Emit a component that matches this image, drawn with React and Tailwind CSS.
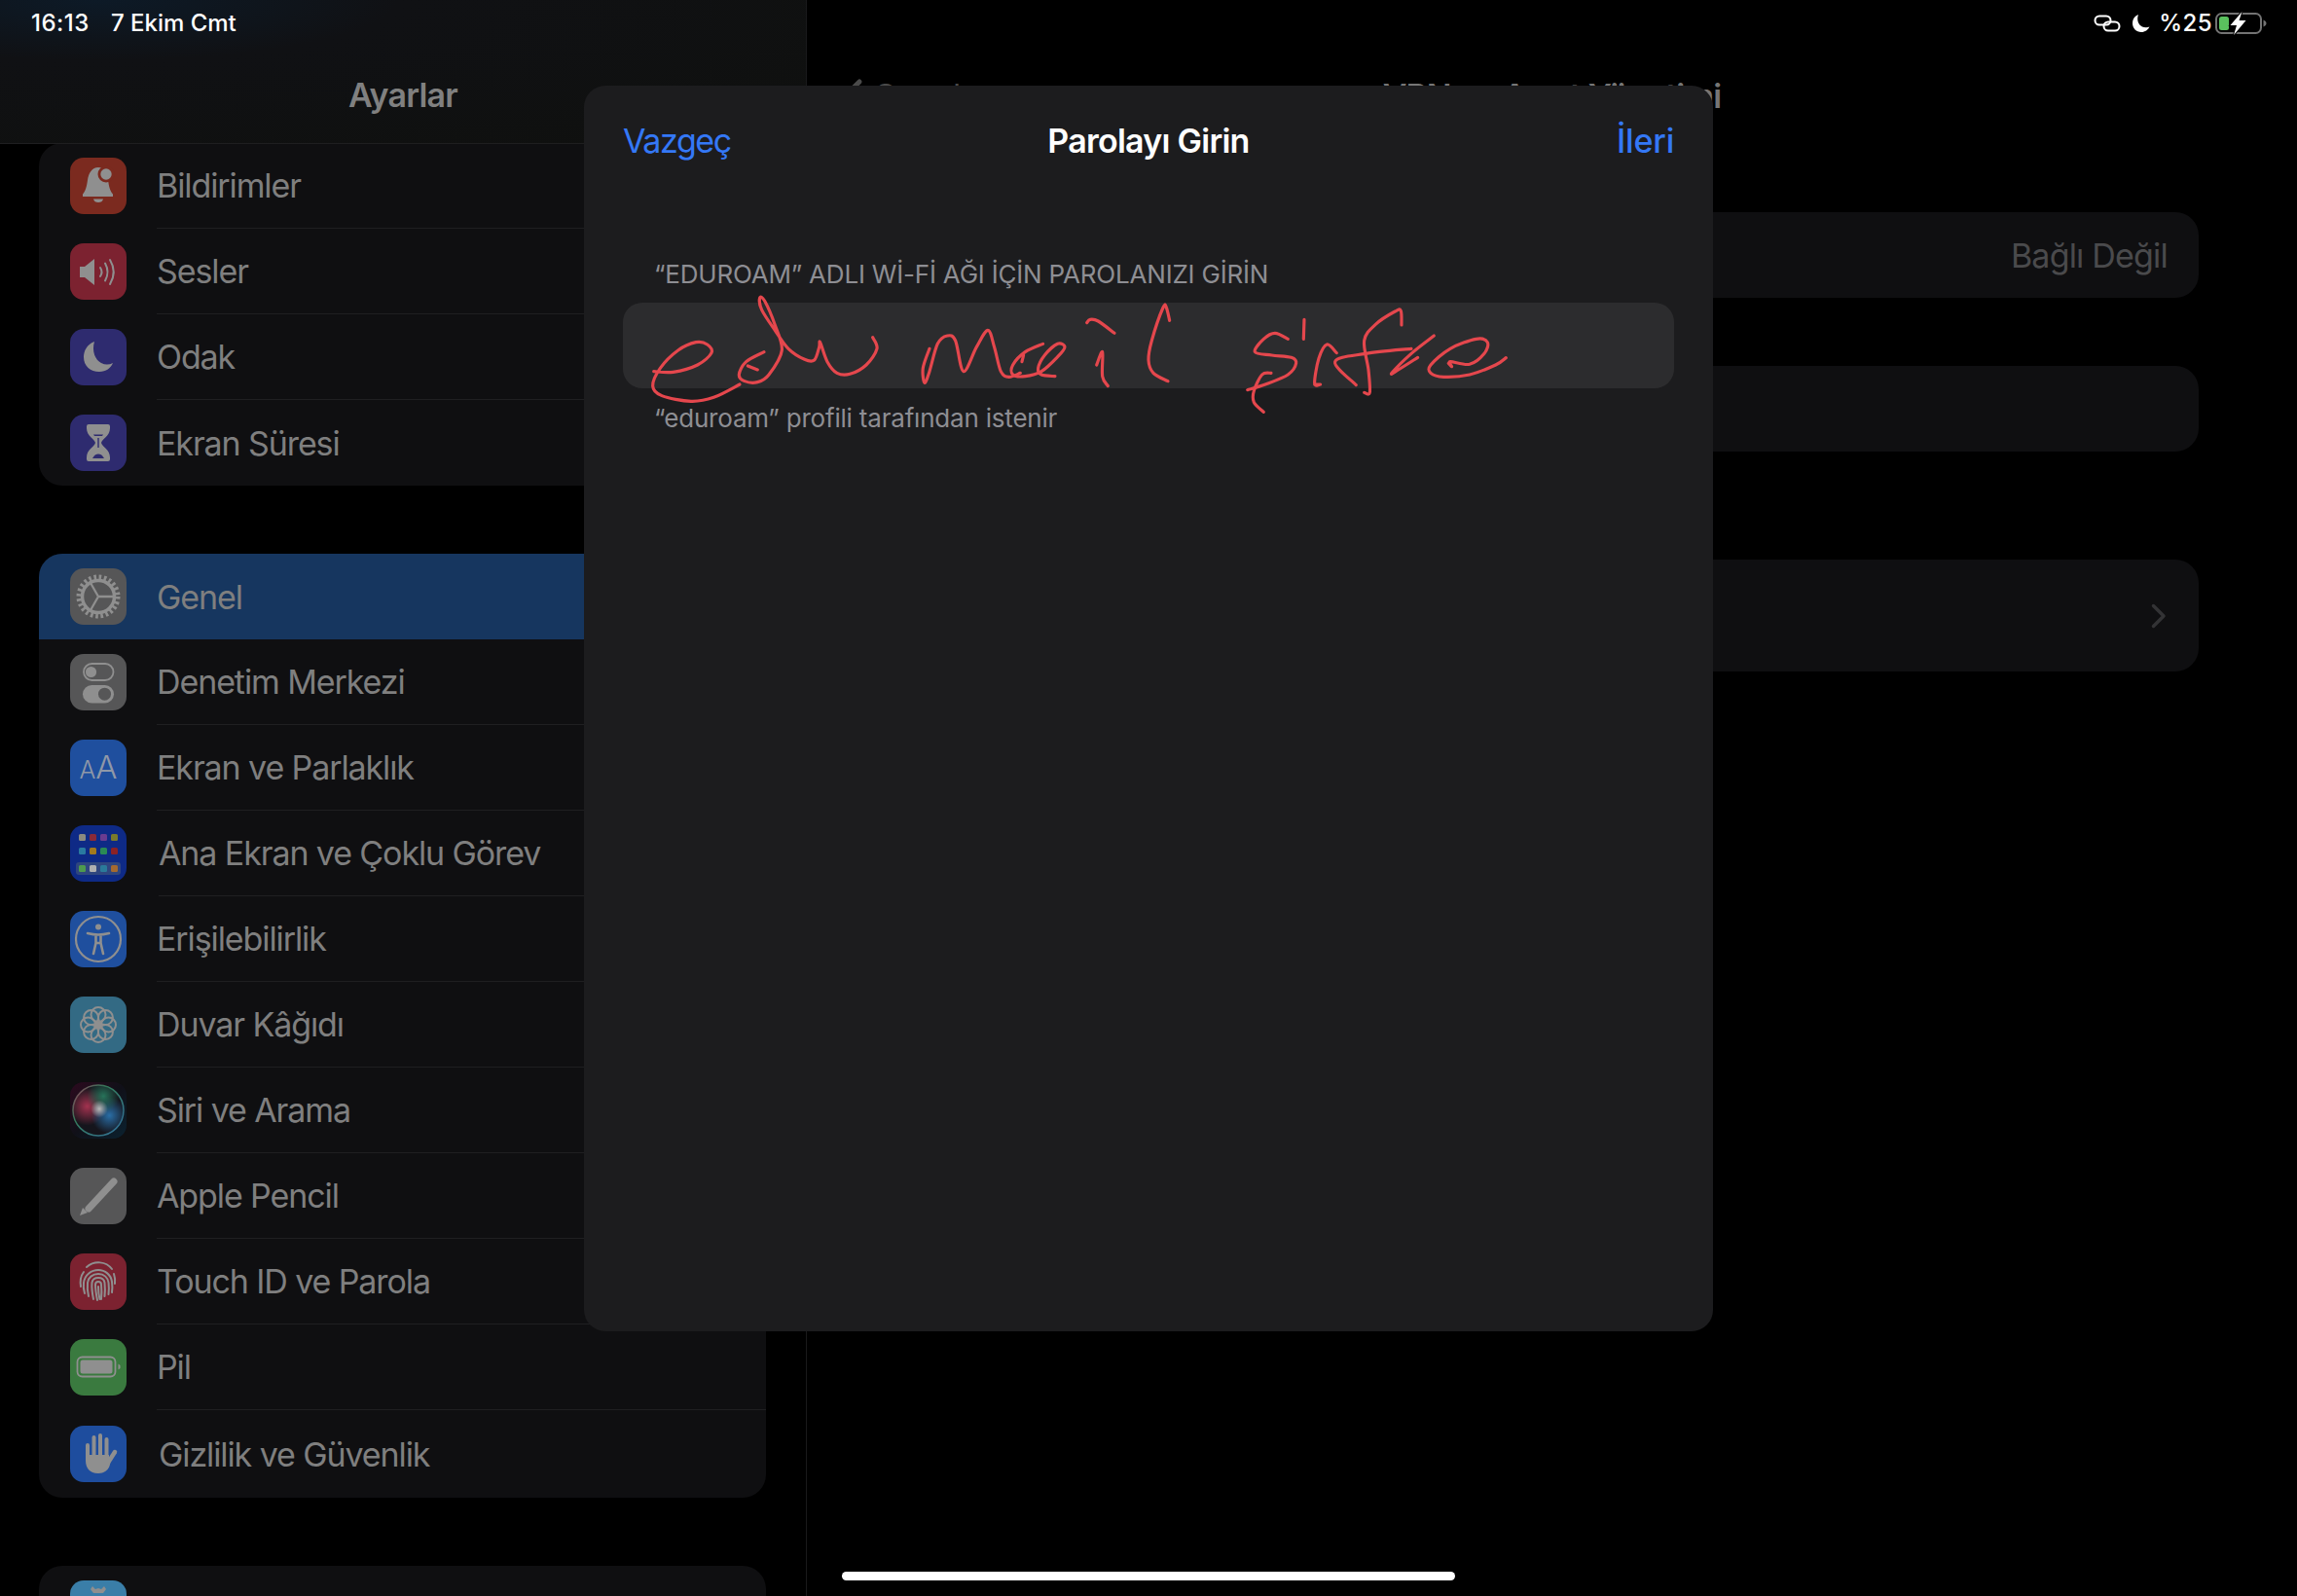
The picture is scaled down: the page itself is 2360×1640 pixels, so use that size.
const GRAY = "#8f8f8f";

// coordinates of the pen strokes are in px relative to the two crop origins
const strokesA = [
  [[155,395],[215,397],[290,375],[333,338],[320,312],[285,305],[230,330],[175,385],[152,440],[180,470],[270,487],[340,475],[420,435]],
  [[445,378],[475,390]],
  [[495,335],[440,365],[418,405],[435,425],[475,428],[510,405],[550,330],[528,250],[497,178],[482,168],[488,205],[530,270],[570,325],[620,358],[650,360],[665,320],[668,305],[690,365],[720,400],[760,403],[810,375],[843,325],[830,290]],
  [[1005,325],[985,385],[990,430],[1005,395],[1030,310],[1060,285],[1085,300],[1110,395],[1150,320],[1185,268],[1205,320],[1225,395],[1250,412],[1285,400]],
  [[1355,310],[1300,335],[1262,375],[1262,405],[1300,410],[1350,395],[1400,350],[1422,320],[1400,310],[1360,345],[1340,385],[1350,405],[1392,410]],
  [[1295,345],[1290,365]],
];
const strokesB = [
  [[-10,155],[0,145],[25,150],[75,187]],
  [[20,285],[38,245],[38,320],[55,350]],
  [[245,148],[235,108],[225,108],[190,210],[180,270],[195,310],[240,335]],
  [[610,205],[570,187],[535,205],[508,245],[560,255],[620,262],[635,280],[610,315],[540,345],[485,362]],
  [[558,310],[530,315],[505,365],[505,400],[535,430]],
  [[660,145],[658,205]],
  [[692,345],[710,345],[692,342],[705,265],[730,222],[760,248]],
  [[820,347],[755,275],[850,250],[990,235]],
  [[960,162],[958,118],[940,120],[880,160],[845,210],[858,300],[862,370],[845,370]],
  [[1060,195],[990,250],[930,310],[950,300],[1010,262]],
  [[1105,280],[1115,290],[1110,275],[1170,283],[1215,250],[1225,215],[1190,205],[1110,235],[1050,285],[1050,310],[1090,322],[1170,315],[1250,285],[1282,263]],
];

function smooth(pts) {
  let d = `M${pts[0][0]} ${pts[0][1]}`;
  for (let i = 0; i < pts.length - 1; i++) {
    const p0 = pts[i - 1] || pts[i];
    const p1 = pts[i];
    const p2 = pts[i + 1];
    const p3 = pts[i + 2] || p2;
    const c1x = p1[0] + (p2[0] - p0[0]) / 6;
    const c1y = p1[1] + (p2[1] - p0[1]) / 6;
    const c2x = p2[0] - (p3[0] - p1[0]) / 6;
    const c2y = p2[1] - (p3[1] - p1[1]) / 6;
    d += ` C${c1x} ${c1y} ${c2x} ${c2y} ${p2[0]} ${p2[1]}`;
  }
  return d;
}

function Scribble() {
  return (
    <svg className="pointer-events-none absolute left-0 top-0 z-40 h-[1640px] w-[2360px]" viewBox="0 0 2360 1640" fill="none" stroke="#e5474d" strokeWidth="9.500" strokeLinecap="round" strokeLinejoin="round">
      <g transform="translate(620 250) scale(0.3333)">
        {strokesA.map((s, i) => <path key={i} d={smooth(s)} />)}
      </g>
      <g transform="translate(1120 280) scale(0.3333)">
        {strokesB.map((s, i) => <path key={i} d={smooth(s)} />)}
      </g>
    </svg>
  );
}

function Glyph({ children }) {
  return <svg viewBox="0 0 58 58" className="h-[58px] w-[58px]">{children}</svg>;
}

const BellIcon = (
  <Glyph>
    <path fill={GRAY} d="M29 10c-6.500 0-10 6-11 13-1 7-2 11-5 14.500V40h31v-2.500c-3-3.500-4-7.500-5-14.500-1-7-3.500-13-10-13z" />
    <circle cx="37" cy="17" r="8.500" fill="#7b2a1f" />
    <circle cx="37" cy="17" r="5.700" fill={GRAY} />
    <path fill={GRAY} d="M24 42.500h10c-.5 2.500-2.500 3.500-5 3.500s-4.500-1-5-3.500z" />
  </Glyph>
);

const SoundIcon = (
  <Glyph>
    <path fill={GRAY} d="M10 24h5l10-8v27l-10-8h-5z" />
    <g fill="none" stroke={GRAY} strokeWidth="2" strokeLinecap="round">
      <path d="M31 25q3 4.500 0 9" />
      <path d="M36 20.500q5 9 0 18" />
      <path d="M41 17q7.500 12.500 0 25" />
    </g>
  </Glyph>
);

const MoonIcon = (
  <Glyph>
    <path fill={GRAY} d="M25 13C17 16 14 23 14 29c0 9 7 15 16 15 7 0 12-4 14-9-4 2-8 2-12 0-6-3-10-12-7-22z" />
  </Glyph>
);

const HourglassIcon = (
  <Glyph>
    <path fill={GRAY} d="M19 10h20a2 2 0 0 1 2 2v2c0 8-8 11-9 15 1 4 9 7 9 15v2a2 2 0 0 1-2 2H19a2 2 0 0 1-2-2v-2c0-8 8-11 9-15-1-4-9-7-9-15v-2a2 2 0 0 1 2-2z" />
    <path fill="#2e2b6f" d="M24 20.500h10l-1 1.500h-8zM28.300 24h1.400v10h-1.400zM24 43.500c1-2 3-3 5-3s4 1 5 3l1 1.500H23z" />
  </Glyph>
);

const GearIcon = (
  <Glyph>
    <g fill="none" stroke={GRAY}>
      <circle cx="29" cy="29" r="20" strokeWidth="5" strokeDasharray="2.618 2.618" />
      <circle cx="29" cy="29" r="16.500" strokeWidth="3.500" />
      <path strokeWidth="2.300" d="M29 29h16M29 29l-8-14M29 29l-8 14" />
    </g>
  </Glyph>
);

const ToggleIcon = (
  <Glyph>
    <rect x="14" y="10" width="30.500" height="17" rx="8.500" fill="none" stroke={GRAY} strokeWidth="1.800" />
    <circle cx="21.500" cy="18.500" r="5.600" fill={GRAY} />
    <rect x="13" y="32" width="32" height="18.500" rx="9.250" fill={GRAY} />
    <circle cx="35.500" cy="41.200" r="6.500" fill="#565657" />
  </Glyph>
);

const TextIcon = (
  <div className="flex h-[58px] w-[58px] items-baseline justify-center pt-[12px] leading-none text-[#8f98a8]">
    <span className="text-[25px] font-light">A</span>
    <span className="text-[33px] font-light">A</span>
  </div>
);

const homeDots = [
  [9, 9, "#8b8a80"], [20, 9, "#8a2a38"], [31, 9, "#6a3c90"], [42, 9, "#7a7a2a"],
  [9, 23, "#2a7aa0"], [20, 23, "#a27a1e"], [31, 23, "#2a8a55"], [42, 23, "#8a2226"],
  [9, 41, "#4e9a4e"], [20, 41, "#b0b0b0"], [31, 41, "#2a7a9a"], [42, 41, "#a46a30"],
];

const HomeIcon = (
  <Glyph>
    <rect x="6" y="38" width="46" height="13" rx="3" fill="#2f467f" />
    {homeDots.map(([x, y, c]) => <rect key={`${x}-${y}`} x={x} y={y} width="7" height="7" rx="1.500" fill={c} />)}
  </Glyph>
);

const AccessIcon = (
  <Glyph>
    <circle cx="29" cy="29" r="23" fill="none" stroke={GRAY} strokeWidth="2.200" />
    <circle cx="29" cy="16.500" r="3" fill={GRAY} />
    <path fill="none" stroke={GRAY} strokeWidth="2.600" strokeLinecap="round" strokeLinejoin="round" d="M18 23c4 1 7 1.500 11 1.500S36 24 40 23M26.500 25v8l-2.500 11M31.500 25v8l2.500 11M26.500 33h5" />
  </Glyph>
);

const FlowerIcon = (
  <Glyph>
    <g fill="none" stroke={GRAY} strokeWidth="2">
      {[0, 45, 90, 135, 180, 225, 270, 315].map((a) => (
        <circle key={a} cx="29" cy="18.500" r="7.500" transform={`rotate(${a} 29 29)`} />
      ))}
    </g>
    <circle cx="29" cy="29" r="3.500" fill={GRAY} />
  </Glyph>
);

const SiriIcon = (
  <svg viewBox="0 0 58 58" className="h-[58px] w-[58px]">
    <defs>
      <radialGradient id="siriRed" cx="0.28" cy="0.42" r="0.38">
        <stop offset="0" stopColor="#a3324f" />
        <stop offset="1" stopColor="#a3324f" stopOpacity="0" />
      </radialGradient>
      <radialGradient id="siriBlue" cx="0.72" cy="0.6" r="0.36">
        <stop offset="0" stopColor="#2a6ea6" />
        <stop offset="1" stopColor="#2a6ea6" stopOpacity="0" />
      </radialGradient>
      <radialGradient id="siriGreen" cx="0.6" cy="0.22" r="0.32">
        <stop offset="0" stopColor="#27735a" />
        <stop offset="1" stopColor="#27735a" stopOpacity="0" />
      </radialGradient>
      <radialGradient id="siriCore" cx="0.52" cy="0.47" r="0.17">
        <stop offset="0" stopColor="#b8b8b8" />
        <stop offset="1" stopColor="#b8b8b8" stopOpacity="0" />
      </radialGradient>
      <linearGradient id="siriBg" x1="0" y1="0" x2="1" y2="1">
        <stop offset="0" stopColor="#2c0a1e" />
        <stop offset="0.5" stopColor="#101018" />
        <stop offset="1" stopColor="#0b2230" />
      </linearGradient>
      <linearGradient id="siriRing" x1="0" y1="0" x2="1" y2="1">
        <stop offset="0" stopColor="#8a4058" />
        <stop offset="0.35" stopColor="#357a5a" />
        <stop offset="1" stopColor="#33709b" />
      </linearGradient>
    </defs>
    <rect width="58" height="58" fill="url(#siriBg)" />
    <circle cx="29" cy="29" r="26" fill="#15151c" stroke="url(#siriRing)" strokeWidth="1.500" />
    <circle cx="29" cy="29" r="26" fill="url(#siriRed)" />
    <circle cx="29" cy="29" r="26" fill="url(#siriBlue)" />
    <circle cx="29" cy="29" r="26" fill="url(#siriGreen)" />
    <circle cx="29" cy="29" r="26" fill="url(#siriCore)" />
  </svg>
);

const PencilIcon = (
  <Glyph>
    <path fill="none" stroke={GRAY} strokeWidth="7" strokeLinecap="round" d="M45 14 19 42" />
    <path fill={GRAY} d="M10 49l3-8 5 5z" />
  </Glyph>
);

const FingerprintIcon = (
  <Glyph>
    <g fill="none" stroke={GRAY} strokeWidth="2" strokeLinecap="round">
      <path d="M17 14C25 7 37 8 43 16" />
      <path d="M11 34c-1-6 0-11 3-15M46 31c.5-4 0-7-1-10" />
      <path d="M15 41c-1-3-1.500-7-1-11 1-8 8-13 15-13s13 5 14 12c.5 4 .5 8 0 11" />
      <path d="M19 44c-1-4-1.500-9-1-14 .5-5 5-9 11-9s10 4 10.500 9c.5 4 .5 8 0 12" />
      <path d="M24 47c-1-5-2-11-1.500-17 .5-3 3-5 6.500-5s6 2 6.500 5c.5 5 .5 10 0 14" />
      <path d="M29 29c-2 0-3 1-3 3 0 5 1 11 2 16M29 29c2 0 3 1 3 3 .5 5 .5 10 0 15" />
      <path d="M29 34c0 5 .5 9 1.500 13" />
    </g>
  </Glyph>
);

const BatteryIcon = (
  <Glyph>
    <rect x="7.500" y="18.500" width="39" height="20" rx="5" fill="none" stroke={GRAY} strokeWidth="1.800" />
    <rect x="10.500" y="21.500" width="33" height="14" rx="2.500" fill={GRAY} />
    <path fill={GRAY} d="M49.500 25.500l2 1.500v3l-2 1.500z" />
  </Glyph>
);

const HandIcon = (
  <Glyph>
    <g stroke={GRAY} strokeLinecap="round" fill="none">
      <path strokeWidth="4" d="M18 20v14M24.500 12v20M31 10v20M37.500 14v20" />
      <path strokeWidth="4.500" d="M39 38l7-11" />
    </g>
    <path fill={GRAY} d="M16 30h24v6c3 0 1 13-11 13-9 0-13-6-13-13z" />
  </Glyph>
);

const PeekIcon = (
  <Glyph>
    <path fill={GRAY} d="M23 6l3 3 3-1 3 1 3-3 2 3-3 4h-10l-3-4z" />
  </Glyph>
);

const firstGroup = [
  { label: "Bildirimler", bg: "bg-[#7b2a1f]", icon: BellIcon },
  { label: "Sesler", bg: "bg-[#7c2230]", icon: SoundIcon },
  { label: "Odak", bg: "bg-[#2e2b6f]", icon: MoonIcon },
  { label: "Ekran Süresi", bg: "bg-[#2e2b6f]", icon: HourglassIcon },
];

const secondGroup = [
  { label: "Genel", bg: "bg-[#565657]", icon: GearIcon, active: true },
  { label: "Denetim Merkezi", bg: "bg-[#565657]", icon: ToggleIcon },
  { label: "Ekran ve Parlaklık", bg: "bg-[#1f4f9e]", icon: TextIcon },
  { label: "Ana Ekran ve Çoklu Görev", bg: "bg-[#0e2a86]", icon: HomeIcon, nudge: true },
  { label: "Erişilebilirlik", bg: "bg-[#1f4f9e]", icon: AccessIcon },
  { label: "Duvar Kâğıdı", bg: "bg-[#336a84]", icon: FlowerIcon },
  { label: "Siri ve Arama", bg: "bg-[#101018]", icon: SiriIcon },
  { label: "Apple Pencil", bg: "bg-[#565657]", icon: PencilIcon },
  { label: "Touch ID ve Parola", bg: "bg-[#7c2230]", icon: FingerprintIcon },
  { label: "Pil", bg: "bg-[#3a7a3f]", icon: BatteryIcon },
  { label: "Gizlilik ve Güvenlik", bg: "bg-[#1e4d9e]", icon: HandIcon, nudge: true, tall: true },
];

function Row({ item, last }) {
  return (
    <div className={`flex items-center pl-[32px] ${item.tall ? "h-[90px]" : "h-[88px]"} ${item.active ? "bg-[#16365f]" : ""}`}>
      <div className={`h-[58px] w-[58px] shrink-0 overflow-hidden rounded-[14px] ${item.bg}`}>{item.icon}</div>
      <div className={`flex h-full flex-1 items-center ${item.nudge ? "ml-[33px]" : "ml-[31px]"} ${last || item.active ? "" : "border-b border-[#1f1f21]"}`}>
        <span className="text-[34px] tracking-[-1.1px] text-[#7f7f7f]">{item.label}</span>
      </div>
    </div>
  );
}

function Group({ items }) {
  return (
    <div className="overflow-hidden rounded-[24px] bg-[#0f0f11]">
      {items.map((item, i) => <Row key={item.label} item={item} last={i === items.length - 1} />)}
    </div>
  );
}

function Sidebar() {
  return (
    <div className="flex h-full w-[829px] shrink-0 flex-col overflow-hidden border-r border-[#19191b]">
      <div className="relative z-10 -mb-[1px] h-[148px] shrink-0 border-b border-[#1e1e20] bg-[radial-gradient(ellipse_at_12%_0%,#0d1a27_0%,#101114_30%,#0f100e_100%)] pt-[72px] text-center text-[34px] font-semibold leading-[52px] tracking-[-0.8px] text-[#808080]">
        Ayarlar
      </div>
      <div className="flex flex-col gap-[70px] pl-[40px] pr-[41px]">
        <Group items={firstGroup} />
        <Group items={secondGroup} />
        <div className="h-[100px] shrink-0 rounded-[24px] bg-[#0f0f11] pl-[32px] pt-[15px]">
          <div className="h-[58px] w-[58px] overflow-hidden rounded-[14px] bg-[#3a7ea8]">{PeekIcon}</div>
        </div>
      </div>
    </div>
  );
}

function DetailPane() {
  return (
    <div className="flex h-full flex-1 flex-col pl-[32px] pr-[101px]">
      <div className="-ml-[32px] -mr-[101px] flex h-[218px] shrink-0 items-start pt-[72px]">
        <div className="relative flex h-[52px] w-full items-center justify-center text-[34px] font-semibold tracking-[-0.8px] text-[#767676]">
          <div className="absolute left-[36px] flex items-center gap-[10px] font-normal text-[#4a4a4a]">
            <svg width="22" height="36" viewBox="0 0 22 36" fill="none" stroke="#4a4a4a" strokeWidth="5" strokeLinecap="round" strokeLinejoin="round">
              <path d="M18 4 4 18l14 14" />
            </svg>
            <span>Genel</span>
          </div>
          VPN ve Aygıt Yönetimi
        </div>
      </div>
      <div className="flex h-[88px] shrink-0 items-center justify-end rounded-[24px] bg-[#0f0f11] pr-[32px] text-[34px] tracking-[-0.8px] text-[#4a4a4c]">
        Bağlı Değil
      </div>
      <div className="mt-[70px] h-[88px] shrink-0 rounded-[24px] bg-[#0f0f11]" />
      <div className="mt-[111px] flex h-[115px] shrink-0 items-center justify-end rounded-[24px] bg-[#0f0f11] pr-[33px]">
        <svg width="16" height="26" viewBox="0 0 16 26" fill="none" stroke="#333335" strokeWidth="3.500" strokeLinecap="round" strokeLinejoin="round">
          <path d="M2.500 2.500 13 13 2.500 23.500" />
        </svg>
      </div>
    </div>
  );
}

function PasswordSheet() {
  return (
    <div className="absolute left-[600px] top-[88px] z-30 flex h-[1280px] w-[1160px] flex-col rounded-[22px] bg-[#1c1c1e] px-[40px]">
      <div className="grid h-[112px] shrink-0 grid-cols-[1fr_auto_1fr] items-center text-[34px] text-[#3478f6]">
        <span className="tracking-[-1.4px]">Vazgeç</span>
        <span className="font-semibold tracking-[-0.75px] text-white">Parolayı Girin</span>
        <span className="text-right font-medium tracking-[-0.2px]">İleri</span>
      </div>
      <p className="mt-[66px] pl-[32px] text-[26px] leading-[32px] tracking-[-0.2px] text-[#8e8e93]">“EDUROAM” ADLI Wİ-Fİ AĞI İÇİN PAROLANIZI GİRİN</p>
      <div className="mt-[13px] h-[88px] shrink-0 rounded-[20px] bg-[#2c2c2e]" />
      <p className="mt-[15px] pl-[32px] text-[26px] leading-[32px] tracking-[-0.2px] text-[#8e8e93]">“eduroam” profili tarafından istenir</p>
    </div>
  );
}

function StatusBar() {
  return (
    <div className="absolute left-0 top-0 z-20 flex h-[48px] w-full items-center justify-between pl-[32px] pr-[30px] text-[24px] font-medium text-white">
      <div className="flex gap-[22px]">
        <span className="tracking-[0.5px]">16:13</span>
        <span>7 Ekim Cmt</span>
      </div>
      <div className="flex items-center">
        <svg width="28" height="18" viewBox="0 0 28 18" fill="none" stroke="#fff" strokeWidth="2">
          <rect x="1.500" y="1.500" width="16" height="9" rx="4.500" />
          <rect x="10.500" y="7.500" width="16" height="9" rx="4.500" />
        </svg>
        <svg className="ml-[11px]" width="20" height="20" viewBox="0 0 20 20">
          <path fill="#fff" d="M7 1C3 2.500 1 6 1 10c0 5 4 9 9 9 4 0 7-2.500 8.500-5.500-2 1-5 1-7.500 0C7 11.500 5 6 7 1z" />
        </svg>
        <span className="ml-[8px] tracking-[0.4px]">%25</span>
        <svg className="ml-[3px]" width="54" height="26" viewBox="0 0 54 26">
          <rect x="1" y="3" width="46" height="20" rx="5.500" fill="none" stroke="#737373" strokeWidth="2" />
          <rect x="4" y="6" width="10" height="14" rx="2.500" fill="#5ac15e" />
          <path fill="#737373" d="M49.500 9.500c2 .7 3 2 3 3.500s-1 2.800-3 3.500z" />
          <path fill="#fff" stroke="#000" strokeWidth="2" paintOrder="stroke" d="M27.500 1 15.500 15h6.500l-3 10 12.500-15h-7z" />
        </svg>
      </div>
    </div>
  );
}

export default function App() {
  return (
    <div className="relative flex h-[1640px] w-[2360px] overflow-hidden bg-black font-['Inter',sans-serif]">
      <Sidebar />
      <DetailPane />
      <StatusBar />
      <PasswordSheet />
      <Scribble />
      <div className="absolute bottom-[16px] left-[865px] z-40 h-[9px] w-[630px] rounded-full bg-white" />
    </div>
  );
}
